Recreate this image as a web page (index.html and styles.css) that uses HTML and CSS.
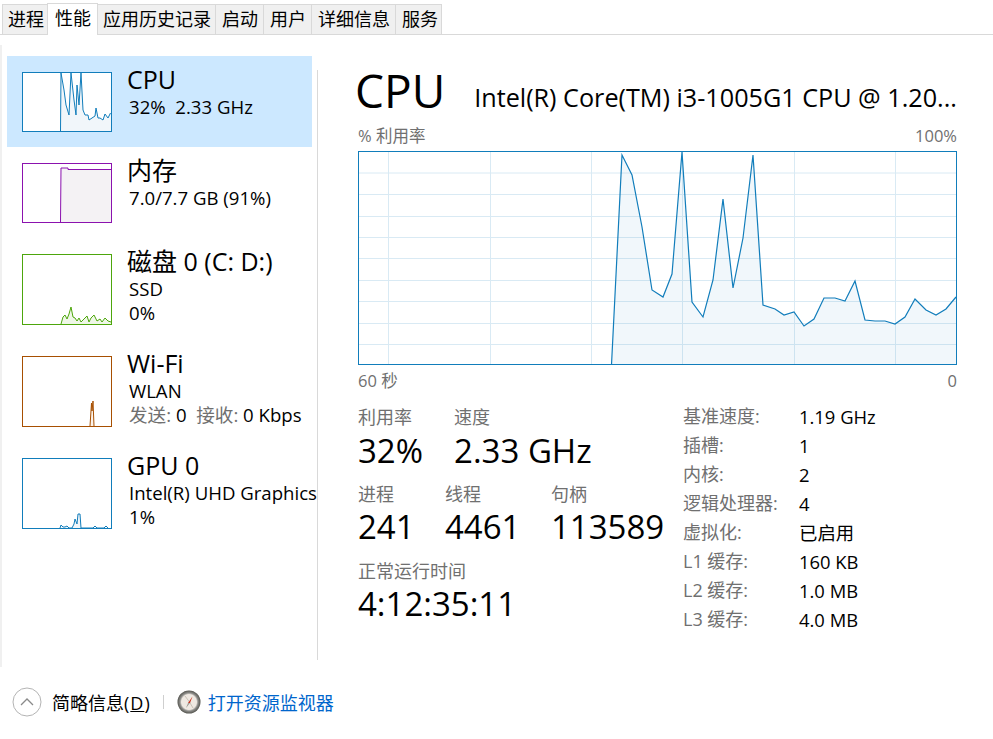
FILE: index.html
```html
<!DOCTYPE html>
<html lang="zh">
<head>
    <meta charset="UTF-8">
    <title>任务管理器</title>
    <link rel="stylesheet" href="styles.css">
</head>
<body>
    <div class="tabs">
        <div class="tab">进程</div>
        <div class="tab active">性能</div>
        <div class="tab">应用历史记录</div>
        <div class="tab">启动</div>
        <div class="tab">用户</div>
        <div class="tab">详细信息</div>
        <div class="tab">服务</div>
    </div>

    <div class="main">
        <div class="side">
            <div class="item selected">
                <svg class="thumb" viewBox="22 72 90 60">
                    <polygon points="60.5,131 61,73 64,90 66,105 69,115 71,73 74,100 76,115 77,85 79,105 81,73 83,110 85,115 88,115 89,120 92,118 95,116 96,108 98,118 100,118 103,120 105,114 108,118 110.5,113 111,131" fill="#f1f6fa" stroke="none"/>
                    <polyline points="60.5,131 61,73 64,90 66,105 69,115 71,73 74,100 76,115 77,85 79,105 81,73 83,110 85,115 88,115 89,120 92,118 95,116 96,108 98,118 100,118 103,120 105,114 108,118 110.5,113" fill="none" stroke="#117dbb"/>
                    <rect x="22.5" y="72.5" width="89" height="59" fill="none" stroke="#117dbb"/>
                </svg>
                <div class="info">
                    <div class="name">CPU</div>
                    <div class="sub">32%&nbsp; 2.33 GHz</div>
                </div>
            </div>
            <div class="item">
                <svg class="thumb" viewBox="22 163 90 60">
                    <polygon points="60.5,222 61,168 68,168 68,169.5 111,169.5 111,222" fill="#f4f2f4" stroke="none"/>
                    <polyline points="60.5,222 61,168 68,168 68,169.5 111,169.5" fill="none" stroke="#8b12ae"/>
                    <rect x="22.5" y="163.5" width="89" height="59" fill="none" stroke="#8b12ae"/>
                </svg>
                <div class="info">
                    <div class="name">内存</div>
                    <div class="sub">7.0/7.7 GB (91%)</div>
                </div>
            </div>
            <div class="item tall">
                <svg class="thumb big" viewBox="22 254 90 71">
                    <polygon points="61,324 63,317 65,315 67,319 69,314 71,307 73,317 75,318 77,321 79,318 81,322 84,319 87,316 89,322 91,318 94,315 97,321 100,319 102,322 105,318 108,321 111,322 111,324" fill="#eff7e7" stroke="none"/>
                    <polyline points="61,324 63,317 65,315 67,319 69,314 71,307 73,317 75,318 77,321 79,318 81,322 84,319 87,316 89,322 91,318 94,315 97,321 100,319 102,322 105,318 108,321 111,322" fill="none" stroke="#4da60c"/>
                    <rect x="22.5" y="254.5" width="89" height="70" fill="none" stroke="#4da60c"/>
                </svg>
                <div class="info">
                    <div class="name">磁盘 0 (C: D:)</div>
                    <div class="sub">SSD</div>
                    <div class="sub">0%</div>
                </div>
            </div>
            <div class="item tall">
                <svg class="thumb big" viewBox="22 356 90 71">
                    <polygon points="90,426 92,401 94,426" fill="#fcf3eb" stroke="none"/>
                    <polyline points="90,426 91.5,403 92,411 93,401 94,426" fill="none" stroke="#a74f01"/>
                    <rect x="22.5" y="356.5" width="89" height="70" fill="none" stroke="#a74f01"/>
                </svg>
                <div class="info">
                    <div class="name">Wi-Fi</div>
                    <div class="sub">WLAN</div>
                    <div class="sub"><span class="gray">发送:</span> 0&nbsp; <span class="gray">接收:</span> 0 Kbps</div>
                </div>
            </div>
            <div class="item tall">
                <svg class="thumb big" viewBox="22 458 90 71">
                    <polygon points="60,528 61,525 63,527 65,527 67,526 69,528 72,528 74,524 75,519 77,524 78,514 80,514 81,528" fill="#f1f6fa" stroke="none"/>
                    <polyline points="60,528 61,525 63,527 65,527 67,526 69,528 72,528 74,524 75,519 77,524 78,514 80,514 81,528 93,528 95,526 97,528 104,528 106,526 108,528" fill="none" stroke="#117dbb"/>
                    <rect x="22.5" y="458.5" width="89" height="70" fill="none" stroke="#117dbb"/>
                </svg>
                <div class="info">
                    <div class="name">GPU 0</div>
                    <div class="sub">Intel(R) UHD Graphics</div>
                    <div class="sub">1%</div>
                </div>
            </div>
        </div>
        <div class="side-line"></div>

        <div class="detail">
            <div class="head">
                <div class="title">CPU</div>
                <div class="model">Intel(R) Core(TM) i3-1005G1 CPU @ 1.20...</div>
            </div>
            <div class="graph-top">
                <span>% 利用率</span>
                <span>100%</span>
            </div>
            <svg class="graph" viewBox="358 151 600 215">
                <path d="M358 173H957M358 194.500H957M358 216.500H957M358 237.500H957M358 258.500H957M358 280.500H957M358 301.500H957M358 323.500H957M358 344.500H957M388.500 151V365M490.500 151V365M591.500 151V365M682.500 151V365M794.500 151V365M895.500 151V365" fill="none" stroke="#d9eaf4"/>
                <polygon points="611.500,365 622,155 632,175 642,227 652,290 663,297 672,274 682,152 692,302 703,317 713,280 723,199 733,288 743,238 753,155 763,305 775,309 784,315 794,312 804,326 814,319 824,298 835,298 845,301 855,281 865,320 875,321 885,321 895,324 905,317 915,299 926,310 936,315 946,309 956,297 956,365" fill="#117dbb" fill-opacity="0.06"/>
                <polyline points="611.500,365 622,155 632,175 642,227 652,290 663,297 672,274 682,152 692,302 703,317 713,280 723,199 733,288 743,238 753,155 763,305 775,309 784,315 794,312 804,326 814,319 824,298 835,298 845,301 855,281 865,320 875,321 885,321 895,324 905,317 915,299 926,310 936,315 946,309 956,297" fill="none" stroke="#117dbb" stroke-width="1.200"/>
                <rect x="358.500" y="151.500" width="598" height="213" fill="none" stroke="#117dbb"/>
            </svg>
            <div class="graph-bottom">
                <span>60 秒</span>
                <span>0</span>
            </div>

            <div class="stats">
                <div class="stats-left">
                    <div class="stat-row first">
                        <div class="stat"><div class="label">利用率</div><div class="value">32%</div></div>
                        <div class="stat"><div class="label">速度</div><div class="value">2.33 GHz</div></div>
                    </div>
                    <div class="stat-row second">
                        <div class="stat"><div class="label">进程</div><div class="value">241</div></div>
                        <div class="stat"><div class="label">线程</div><div class="value">4461</div></div>
                        <div class="stat"><div class="label">句柄</div><div class="value">113589</div></div>
                    </div>
                    <div class="stat"><div class="label">正常运行时间</div><div class="value">4:12:35:11</div></div>
                </div>
                <div class="props">
                    <div class="label">基准速度:</div><div>1.19 GHz</div>
                    <div class="label">插槽:</div><div>1</div>
                    <div class="label">内核:</div><div>2</div>
                    <div class="label">逻辑处理器:</div><div>4</div>
                    <div class="label">虚拟化:</div><div>已启用</div>
                    <div class="label">L1 缓存:</div><div>160 KB</div>
                    <div class="label">L2 缓存:</div><div>1.0 MB</div>
                    <div class="label">L3 缓存:</div><div>4.0 MB</div>
                </div>
            </div>
        </div>
    </div>

    <div class="footer">
        <svg class="toggle" viewBox="0 0 30 30">
            <circle cx="15" cy="15" r="14" fill="none" stroke="#b4b4b4"/>
            <path d="M9 18L15 12L21 18" fill="none" stroke="#8a8a8a" stroke-width="1.300"/>
        </svg>
        <div class="less">简略信息<span class="key">(<u>D</u>)</span></div>
        <div class="divider"></div>
        <svg class="monitor" viewBox="0 0 24 24">
            <defs>
                <radialGradient id="ring">
                    <stop offset="0.650" stop-color="#efe9e2"/>
                    <stop offset="0.780" stop-color="#8f8f8c"/>
                    <stop offset="1" stop-color="#55554f"/>
                </radialGradient>
            </defs>
            <circle cx="12" cy="12" r="11.500" fill="url(#ring)"/>
            <path d="M8 6L12.500 12L16 18" fill="none" stroke="#c9c2b8" stroke-width="1"/>
            <path d="M15.500 6.500L13 13L11 13Z" fill="#c8321e"/>
            <path d="M13 13L11 13L9 18Z" fill="#9a9a94"/>
        </svg>
        <a class="link">打开资源监视器</a>
    </div>
</body>
</html>
```

FILE: styles.css
```css
*{box-sizing: border-box;}
body{
    margin: 0;
    background-color: white;
    color: black;
    font-family: "Open Sans", "Noto Sans CJK SC", sans-serif;
    font-size: 18px;
    overflow: hidden;
}

.tabs{
    display: flex;
    align-items: flex-end;
    height: 35px;
    padding-left: 2px;
    border-bottom: 1px solid #d9d9d9;
}
.tab{
    height: 30px;
    line-height: 29px;
    padding: 0 5px 0 6px;
    background-color: #f0f0f0;
    border: 1px solid #d9d9d9;
    border-left: none;
    border-bottom: none;
    white-space: nowrap;
}
.tab:first-child{
    border-left: 1px solid #d9d9d9;
    padding: 0 3px 0 5px;
}
.tab:nth-child(3){padding: 0 4px 0 5px;}
.tab:nth-child(7){padding: 0 3px 0 6px;}
.tab.active{
    height: 32px;
    line-height: 28px;
    margin: 0 0 -1px -1px;
    background-color: white;
    border-left: 1px solid #d9d9d9;
    padding: 0 6px 0 7px;
}

.main{
    display: flex;
    height: 622px;
    margin-top: 10px;
    border-left: 2px solid #f0f0f0;
}
.side{
    width: 315px;
    padding: 11px 0 0 5px;
    flex-shrink: 0;
}
.side-line{
    width: 1px;
    flex-shrink: 0;
    margin: 25px 0 7px;
    background-color: #d9d9d9;
}
.item{
    display: flex;
    height: 91px;
    width: 305px;
    padding: 16px 0 0 15px;
    gap: 16px;
}
.item.selected{background-color: #cce8ff;}
.item.tall{height: 102px;}
.thumb{
    width: 90px;
    height: 60px;
    flex-shrink: 0;
    background-color: white;
}
.thumb.big{height: 71px;}
.info{margin-top: -8px;}
.name{
    font-size: 25px;
    line-height: 30px;
    margin-left: -1px;
    margin-bottom: 1px;
    white-space: nowrap;
}
.sub{
    font-size: 18.600px;
    line-height: 24px;
    margin-left: 1px;
    white-space: nowrap;
}
.gray{color: #707070;}

.detail{
    flex: 1;
    min-width: 0;
    padding: 0 36px 0 40px;
}
.head{
    display: flex;
    align-items: flex-end;
    height: 78px;
    margin-left: -3px;
    gap: 29px;
}
.title{
    font-size: 46px;
    line-height: 66px;
}
.model{
    font-size: 25.200px;
    line-height: 32px;
    margin-bottom: 10px;
    white-space: nowrap;
}
.graph-top, .graph-bottom{
    display: flex;
    justify-content: space-between;
    color: #707070;
    font-size: 16.500px;
    line-height: 24px;
}
.graph-top{margin: 1px 0 3px;}
.graph-bottom{margin-top: 3px;}
.graph{
    display: block;
    width: 600px;
    height: 215px;
}

.stats{
    display: flex;
    margin-top: 12px;
}
.stats-left{width: 325px;}
.stat-row{display: flex;}
.stat-row.first{gap: 31px; margin-bottom: 11px;}
.stat-row.first .label{margin-bottom: 1px;}
.stat-row.second .stat:nth-child(1){width: 87px;}
.stat-row.second .stat:nth-child(2){width: 106px;}
.stat-row.second{margin-bottom: 11px;}
.stat-row.second .label{line-height: 23px;}
.label{
    color: #707070;
    font-size: 18px;
    line-height: 24px;
}
.value{
    font-size: 33px;
    line-height: 42px;
}
.props{
    display: grid;
    grid-template-columns: 116px auto;
    grid-auto-rows: 29px;
    line-height: 29px;
    font-size: 18.400px;
    margin-top: -3px;
    align-content: start;
}
.props .label{line-height: 29px;}

.footer{
    display: flex;
    align-items: center;
    height: 70px;
    padding-left: 12px;
}
.toggle{
    width: 30px;
    height: 30px;
}
.less{margin-left: 10px;}
.key{letter-spacing: 1px;}
.divider{
    width: 1px;
    height: 14px;
    margin: 0 13px 0 12px;
    background-color: #cfcfcf;
}
.monitor{
    width: 24px;
    height: 24px;
}
.link{
    margin-left: 7px;
    color: #0066cc;
}
```
